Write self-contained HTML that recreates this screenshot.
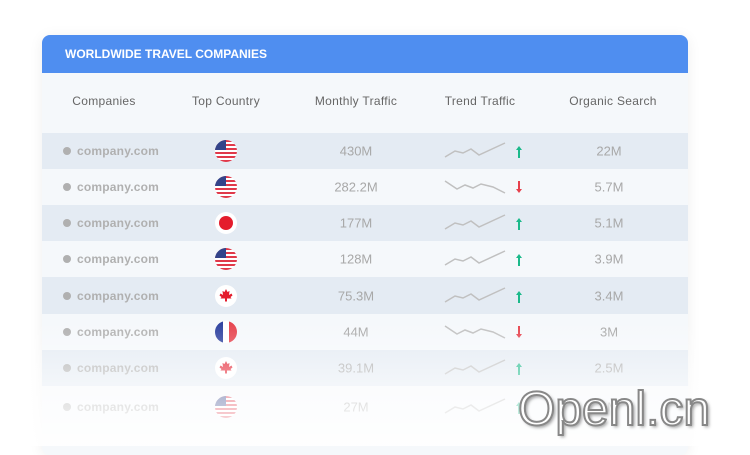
<!DOCTYPE html>
<html><head><meta charset="utf-8"><style>
*{margin:0;padding:0;box-sizing:border-box}
body{width:750px;height:446px;background:#fff;font-family:"Liberation Sans",sans-serif;position:relative;overflow:hidden}
.card{position:absolute;left:42px;top:35px;width:646px;height:420px;background:#f5f8fb;border-radius:8px;box-shadow:0 2px 14px rgba(0,0,0,0.07);overflow:hidden}
.hd{height:38px;background:#4f8ef0;color:#fff;font-weight:bold;font-size:12px;padding-left:23px;line-height:39px;letter-spacing:0}
.th{position:absolute;top:59px;font-size:12px;color:#666;transform:translateX(-50%);white-space:nowrap;letter-spacing:0.3px}
.row{position:absolute;left:0;width:646px;height:36px}
.row.d{background:#e4ebf3}
.c{position:absolute;top:50%;transform:translate(-50%,-50%);font-size:13px;color:#a8a8a8;white-space:nowrap}
.co{position:absolute;left:21px;top:50%;transform:translateY(-50%);font-size:12px;color:#b0b0b0;font-weight:bold;letter-spacing:0.2px}
.co:before{content:"";display:inline-block;width:8px;height:8px;border-radius:50%;background:#b0b0b0;margin-right:6px;vertical-align:0}
.fade{position:absolute;left:0;top:320px;width:750px;height:126px;background:linear-gradient(rgba(255,255,255,0),rgba(255,255,255,0.55) 50%,rgba(255,255,255,0.92))}
.wm{position:absolute;left:518px;top:382px;font-size:48px;color:#fff;-webkit-text-stroke:2px #888;font-family:"Liberation Sans",sans-serif;text-shadow:2px 2px 3px rgba(0,0,0,0.4)}
</style></head><body>
<svg width="0" height="0" style="position:absolute"><defs>
<symbol id="us" viewBox="0 0 22 22"><clipPath id="cl"><circle cx="11" cy="11" r="11"/></clipPath><g clip-path="url(#cl)"><rect width="22" height="22" fill="#fff"/><g fill="#e0394a"><rect y="0" width="22" height="2"/><rect y="4" width="22" height="2"/><rect y="8" width="22" height="2"/><rect y="12" width="22" height="2"/><rect y="16" width="22" height="2"/><rect y="20" width="22" height="2"/></g><rect width="11" height="10" fill="#33448a"/></g></symbol>
<symbol id="jp" viewBox="0 0 22 22"><circle cx="11" cy="11" r="11" fill="#fff"/><circle cx="11" cy="11" r="7" fill="#e41c2c"/></symbol>
<symbol id="ca" viewBox="0 0 22 22"><circle cx="11" cy="11" r="11" fill="#fff"/><path d="M11 4l1.5 3 2-1-0.5 4 2.5-1.5 1 2-2 1.5 1 1.5H12v3h-2v-3H5.5l1-1.5-2-1.5 1-2L8 10 7.5 6l2 1z" fill="#e41c2c"/></symbol>
<symbol id="fr" viewBox="0 0 22 22"><clipPath id="cf"><circle cx="11" cy="11" r="11"/></clipPath><g clip-path="url(#cf)"><rect width="8" height="22" fill="#2b3f9e"/><rect x="8" width="6" height="22" fill="#fff"/><rect x="14" width="8" height="22" fill="#e6414c"/></g></symbol>
<symbol id="up" viewBox="0 0 90 20"><polyline points="2,16 12,10 20,12 28,8 36,14 62,2" fill="none" stroke="#c0c0c0" stroke-width="1.5"/><path d="M76 5l-3 4h2v8h2V9h2z" fill="#1bb98a"/></symbol>
<symbol id="dn" viewBox="0 0 90 20"><polyline points="2,4 14,12 22,8 30,11 38,7 50,10 62,16" fill="none" stroke="#c0c0c0" stroke-width="1.5"/><path d="M76 16l-3-4h2V4h2v8h2z" fill="#e6414c"/></symbol>
</defs></svg>
<div class="card">
<div class="hd">WORLDWIDE TRAVEL COMPANIES</div>
<div class="th" style="left:62px">Companies</div>
<div class="th" style="left:184px">Top Country</div>
<div class="th" style="left:314px">Monthly Traffic</div>
<div class="th" style="left:438px">Trend Traffic</div>
<div class="th" style="left:571px">Organic Search</div>

<div class="row d" style="top:98px"><span class="co">company.com</span><svg class="c" style="left:446px" width="90" height="20"><use href="#up"/></svg><svg class="c" style="left:184px" width="22" height="22"><use href="#us"/></svg><span class="c" style="left:314px">430M</span><span class="c" style="left:567px">22M</span></div>
<div class="row" style="top:134px"><span class="co">company.com</span><svg class="c" style="left:184px" width="22" height="22"><use href="#us"/></svg><span class="c" style="left:314px">282.2M</span><svg class="c" style="left:446px" width="90" height="20"><use href="#dn"/></svg><span class="c" style="left:567px">5.7M</span></div>
<div class="row d" style="top:170px"><span class="co">company.com</span><svg class="c" style="left:184px" width="22" height="22"><use href="#jp"/></svg><span class="c" style="left:314px">177M</span><svg class="c" style="left:446px" width="90" height="20"><use href="#up"/></svg><span class="c" style="left:567px">5.1M</span></div>
<div class="row" style="top:206px"><span class="co">company.com</span><svg class="c" style="left:184px" width="22" height="22"><use href="#us"/></svg><span class="c" style="left:314px">128M</span><svg class="c" style="left:446px" width="90" height="20"><use href="#up"/></svg><span class="c" style="left:567px">3.9M</span></div>
<div class="row d" style="top:242px;height:37px"><span class="co">company.com</span><svg class="c" style="left:184px" width="22" height="22"><use href="#ca"/></svg><span class="c" style="left:314px">75.3M</span><svg class="c" style="left:446px" width="90" height="20"><use href="#up"/></svg><span class="c" style="left:567px">3.4M</span></div>
<div class="row" style="top:279px"><span class="co">company.com</span><svg class="c" style="left:184px" width="22" height="22"><use href="#fr"/></svg><span class="c" style="left:314px">44M</span><svg class="c" style="left:446px" width="90" height="20"><use href="#dn"/></svg><span class="c" style="left:567px">3M</span></div>
<div class="row d" style="top:315px"><span class="co">company.com</span><svg class="c" style="left:184px" width="22" height="22"><use href="#ca"/></svg><span class="c" style="left:314px">39.1M</span><svg class="c" style="left:446px" width="90" height="20"><use href="#up"/></svg><span class="c" style="left:567px">2.5M</span></div>
<div class="row" style="top:354px"><span class="co">company.com</span><svg class="c" style="left:184px" width="22" height="22"><use href="#us"/></svg><span class="c" style="left:314px">27M</span><svg class="c" style="left:446px" width="90" height="20"><use href="#up"/></svg><span class="c" style="left:567px">2M</span></div>
</div>
<div class="fade"></div>
<div class="wm">Openl.cn</div>
</body></html>
